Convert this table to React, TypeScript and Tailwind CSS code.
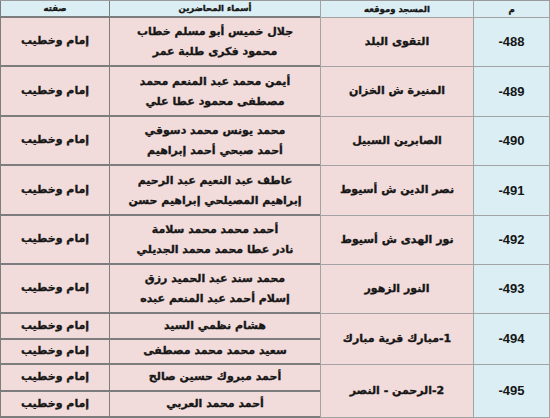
const ROWS = [
  {
    no: "-488",
    mosque: "التقوى البلد",
    names: ["جلال خميس أبو مسلم خطاب", "محمود فكرى طلبة عمر"],
    h: "h-[49px]",
  },
  {
    no: "-489",
    mosque: "المنيرة ش الخزان",
    names: ["أيمن محمد عبد المنعم محمد", "مصطفى محمود عطا علي"],
    h: "h-[50px]",
  },
  {
    no: "-490",
    mosque: "الصابرين السبيل",
    names: ["محمد يونس محمد دسوقي", "أحمد صبحي أحمد إبراهيم"],
    h: "h-[49px]",
  },
  {
    no: "-491",
    mosque: "نصر الدين ش أسيوط",
    names: ["عاطف عبد النعيم عبد الرحيم", "إبراهيم المصيلحي إبراهيم حسن"],
    h: "h-[50px]",
  },
  {
    no: "-492",
    mosque: "نور الهدى ش أسيوط",
    names: ["أحمد محمد محمد سلامة", "نادر عطا محمد محمد الجديلي"],
    h: "h-[49px]",
  },
  {
    no: "-493",
    mosque: "النور الزهور",
    names: ["محمد سند عبد الحميد رزق", "إسلام أحمد عبد المنعم عبده"],
    h: "h-[49px]",
  },
];

const SPLIT = [
  {
    no: "-494",
    mosque: "1-مبارك قرية مبارك",
    names: ["هشام نظمي السيد", "سعيد محمد محمد مصطفى"],
    h: "h-[51px]",
  },
  {
    no: "-495",
    mosque: "2-الرحمن - النصر",
    names: ["أحمد مبروك حسين صالح", "أحمد محمد العربي"],
    h: "h-[53px]",
  },
];

const ROLE = "إمام وخطيب";

const thin = "border-b border-[#a3a3a3]";
const thick = "border-b-2 border-[#1f1a1a]";
const arabic = '"DejaVu Sans", sans-serif';
const latin = '"Liberation Sans", sans-serif';

export default function App() {
  return (
    <div
      dir="rtl"
      className="w-[550px] h-[418px] overflow-hidden bg-white text-[#161616] font-bold [-webkit-text-stroke:0.35px_#161616]"
      style={{ fontFamily: arabic }}
    >
      <div className="border-t border-[#9a9a9a]">
        {/* header */}
        <div className="grid grid-cols-[77px_153px_211px_109px] h-[17px] text-[8.5px] bg-[#daeef3]">
          <div className={`flex items-center justify-center border-r border-l border-[#7d7d7d] ${thin}`}>م</div>
          <div className={`flex items-center justify-center border-l border-[#7d7d7d] ${thin}`}>المسجد وموقعه</div>
          <div className={`flex items-center justify-center border-l border-[#7d7d7d] ${thick}`}>أسماء المحاضرين</div>
          <div className={`flex items-center justify-center border-l border-[#7d7d7d] ${thick}`}>صفته</div>
        </div>

        {ROWS.map((r) => (
          <div key={r.no} className={`grid grid-cols-[77px_153px_211px_109px] ${r.h} text-[11px]`}>
            <div className={`flex items-center justify-center bg-[#daeef3] border-r border-l border-[#7d7d7d] ${thin}`}>
              <span dir="ltr" className="text-[13px] [-webkit-text-stroke:0px]" style={{ fontFamily: latin }}>{r.no}</span>
            </div>
            <div className={`flex items-center justify-center bg-[#f2dcdb] border-l border-[#7d7d7d] ${thin}`}>
              {r.mosque}
            </div>
            <div className={`flex flex-col items-center justify-center gap-[3px] leading-[17px] bg-[#f2dcdb] border-l border-[#7d7d7d] ${thick}`}>
              <span>{r.names[0]}</span>
              <span>{r.names[1]}</span>
            </div>
            <div className={`flex items-center justify-center bg-[#f2dcdb] border-l border-[#7d7d7d] ${thick}`}>
              {ROLE}
            </div>
          </div>
        ))}

        {SPLIT.map((r) => (
          <div key={r.no} className={`grid grid-cols-[77px_153px_320px] ${r.h} text-[11px]`}>
            <div className={`flex items-center justify-center bg-[#daeef3] border-r border-l border-[#7d7d7d] ${thin}`}>
              <span dir="ltr" className="text-[13px] [-webkit-text-stroke:0px]" style={{ fontFamily: latin }}>{r.no}</span>
            </div>
            <div className={`flex items-center justify-center bg-[#f2dcdb] border-l border-[#7d7d7d] ${thin}`}>
              {r.mosque}
            </div>
            <div className="flex flex-col">
              {r.names.map((n) => (
                <div key={n} className="grid grid-cols-[211px_109px] flex-1">
                  <div className={`flex items-center justify-center bg-[#f2dcdb] border-l border-[#7d7d7d] ${thick}`}>{n}</div>
                  <div className={`flex items-center justify-center bg-[#f2dcdb] border-l border-[#7d7d7d] ${thick}`}>{ROLE}</div>
                </div>
              ))}
            </div>
          </div>
        ))}
      </div>
    </div>
  );
}
